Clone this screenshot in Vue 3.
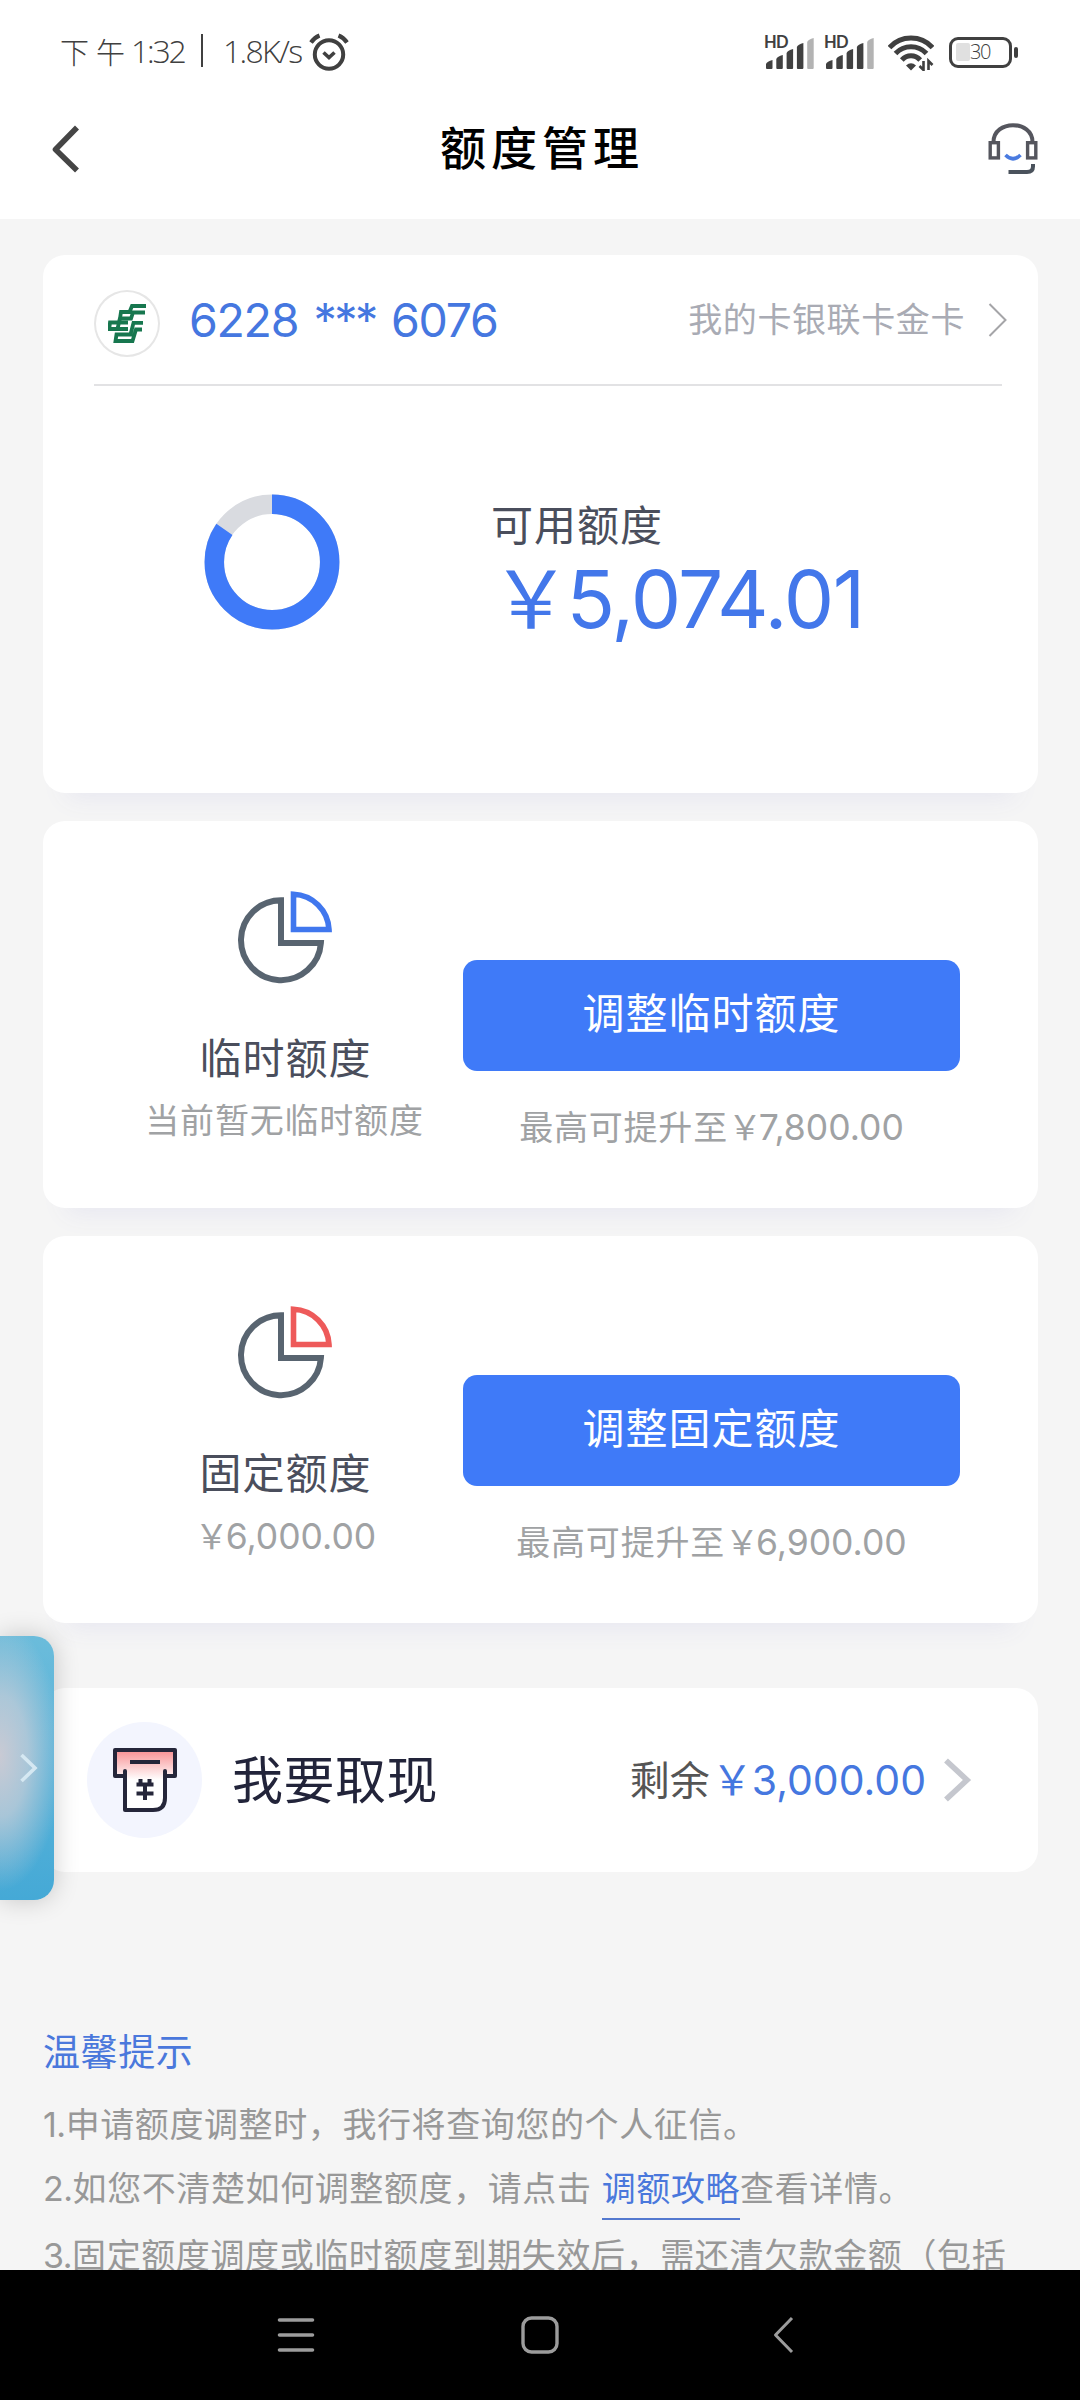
<script setup>
const bars = [8, 13, 19, 25, 30]

const limits = [
  { name: '临时额度', note: '当前暂无临时额度', amount: '', max: '7,800.00', accent: '#4077ee' },
  { name: '固定额度', note: '', amount: '6,000.00', max: '6,900.00', accent: '#ee5a5a' },
]
</script>

<template>
  <div class="screen">
    <header class="top">
      <div class="status">
        <div class="status-left">
          <span class="ampm">下午</span>
          <span class="clock">1:32</span>
          <i class="sep"></i>
          <span class="speed">1.8K/s</span>
          <svg class="alarm" width="40" height="38" viewBox="0 0 40 38" fill="none" stroke="#404040">
            <circle cx="20" cy="21.500" r="14.200" stroke-width="4" />
            <path d="M14.500 19.500 20 24.500 25.500 19.500" stroke-width="3.600" />
            <path d="M2 9.500Q5.500 4.500 10.500 2.500M38 9.500Q34.500 4.500 29.500 2.500" stroke-width="4.200" />
          </svg>
        </div>
        <div class="status-right">
          <div v-for="n in 2" :key="n" class="signal">
            <svg width="52" height="34" viewBox="0 0 52 34">
              <path
                v-for="(h, i) in bars"
                :key="i"
                :d="`M${2 + i * 10.300} 33v-${h - 4}q1-2.500 6.500-4v${h}q0 1-1 1h-4.500q-1 0-1-1z`"
                :fill="i === 4 ? '#b3b3b3' : '#404040'"
              />
            </svg>
            <span class="hd">HD</span>
          </div>
          <svg class="wifi" width="46" height="36" viewBox="0 0 46 36" fill="none" stroke="#404040" stroke-width="5">
            <path d="M1.500 12.500C13-.2 33-.2 44.500 12.500" />
            <path d="M7.500 18.500C16 9.500 30 9.500 38.500 18.500" />
            <path d="M13.800 25C19 19.300 27 19.300 32.200 25" />
            <path d="M18 30.500Q23 26 28 30.500L23 35.500z" fill="#404040" stroke="none" />
            <path d="M35.500 26v9l-4-4M40.500 35v-9l4 4" stroke-width="2.600" />
          </svg>
          <div class="battery"><i class="level"></i><span>30</span></div>
          <i class="nub"></i>
        </div>
      </div>
      <div class="titlebar">
        <svg width="30" height="50" viewBox="0 0 30 50" fill="none" stroke="#454545" stroke-width="5.600" stroke-linejoin="round">
          <path d="M27 3.500 5.500 25.500 27 46.500" />
        </svg>
        <h1>额度管理</h1>
        <svg width="52" height="52" viewBox="0 0 52 52" fill="none" stroke="#55565e" stroke-width="3.400">
          <path d="M6.500 19C6.500-3.500 45.500-3.500 45.500 19" stroke-width="4" />
          <rect x="3.200" y="19.700" width="8.200" height="15.200" />
          <rect x="40.600" y="19.700" width="8.200" height="15.200" />
          <path d="M18.500 32Q26 39.500 33.500 32" stroke="#4a7be0" stroke-width="3.600" />
          <path d="M46 41v2.500Q46 49 40 49H21.500" stroke="#4a525c" stroke-width="4" />
        </svg>
      </div>
    </header>

    <main class="content">
      <section class="card overview">
        <div class="account">
          <span class="bank">
            <svg width="39" height="39" viewBox="0 0 39 39" fill="none" stroke="#17774f" stroke-width="3.800">
              <path d="M38 2H24l-2.500 6H13l-1 6.500h11l2-6H37" />
              <path d="M20 18.500H2L1.200 25H20M12 14l-2.500 11" />
              <path d="M35 18.800H25.500L22.500 30.500H8.500L7.500 37H24.500L28 25.500H34" />
            </svg>
          </span>
          <span class="cardno">6228 <span class="mask">***</span> 6076</span>
          <span class="cardname">我的卡银联卡金卡</span>
          <svg class="go" width="20" height="36" viewBox="0 0 20 36" fill="none" stroke="#a5a5a8" stroke-width="2">
            <path d="M1.500 2 17.500 18 1.500 34" />
          </svg>
        </div>
        <div class="available">
          <svg width="136" height="136" viewBox="0 0 136 136" fill="none" stroke-width="19.500">
            <circle cx="68" cy="68" r="57.700" stroke="#d9dbe0" />
            <circle cx="68" cy="68" r="57.700" stroke="#3f7af8" pathLength="100" stroke-dasharray="84.570 100" transform="rotate(-90 68 68)" />
          </svg>
          <div class="figures">
            <p class="label">可用额度</p>
            <p class="total"><span class="yen">&#xFFE5;</span>5,074.01</p>
          </div>
        </div>
      </section>

      <section v-for="item in limits" :key="item.name" class="card limit">
        <div class="kind">
          <svg width="96" height="96" viewBox="0 0 96 96" fill="none" stroke-width="6">
            <path d="M45 10.200A40 40 0 1 0 84.900 53H45z" stroke="#586470" />
            <path d="M57.500 4.200V39.500H93A37 37 0 0 0 57.500 4.200z" :stroke="item.accent" stroke-width="5.600" />
          </svg>
          <h2>{{ item.name }}</h2>
          <p v-if="item.note">{{ item.note }}</p>
          <p v-else class="fixed"><span class="yen">&#xFFE5;</span><span class="num">{{ item.amount }}</span></p>
        </div>
        <div class="action">
          <button type="button">调整{{ item.name }}</button>
          <p>最高可提升至<span class="yen">&#xFFE5;</span><span class="num">{{ item.max }}</span></p>
        </div>
      </section>

      <section class="card cash">
        <span class="cash-icon">
          <svg width="66" height="66" viewBox="0 0 66 66" fill="none" stroke="#25263a" stroke-width="4" stroke-linejoin="round" stroke-linecap="round">
            <defs>
              <linearGradient id="slot" x1="0" y1="0" x2="0" y2="1">
                <stop offset="0" stop-color="#f88f92" />
                <stop offset="0.500" stop-color="#fff" />
              </linearGradient>
            </defs>
            <path d="M3 3h60v26H54v21q0 13-11 13H13V29H3z" fill="url(#slot)" stroke="none" />
            <path d="M13 29H3V3h60v26H53" />
            <path d="M13 24v39h28q12 0 12-12V24" />
            <path d="M18 15h30M24.500 37.500h17M24.500 46.500h17M33 37.500v15.500M28.500 32v5M37.500 32v5" stroke-linecap="butt" />
          </svg>
        </span>
        <h2>我要取现</h2>
        <p class="rest">剩余<b><span class="yen">&#xFFE5;</span>3,000.00</b></p>
        <svg class="go" width="30" height="46" viewBox="0 0 30 46" fill="none" stroke="#c5c7ce" stroke-width="5.600">
          <path d="M4 3.500 25 23 4 42.500" />
        </svg>
      </section>

      <section class="tips">
        <h3>温馨提示</h3>
        <p><span class="no">1.</span>申请额度调整时，我行将查询您的个人征信。</p>
        <p class="withlink"><span class="no">2.</span>如您不清楚如何调整额度，请点击&nbsp;<a>调额攻略</a>查看详情。</p>
        <p><span class="no">3.</span>固定额度调度或临时额度到期失效后，需还清欠款金额（包括</p>
      </section>
    </main>

    <aside class="drawer">
      <svg width="20" height="32" viewBox="0 0 20 32" fill="none" stroke="#d5e8f2" stroke-width="3.600">
        <path d="M3.500 3 17 16 3.500 29" />
      </svg>
    </aside>

    <footer class="nav">
      <svg width="38" height="38" viewBox="0 0 38 38" stroke="#9c9c9c" stroke-width="3.600" stroke-linecap="round">
        <path d="M2.500 4h33M2.500 19h33M2.500 34h33" />
      </svg>
      <svg width="38" height="38" viewBox="0 0 38 38" fill="none" stroke="#9c9c9c" stroke-width="3.400">
        <rect x="2" y="2" width="34" height="34" rx="8.500" />
      </svg>
      <svg width="38" height="38" viewBox="0 0 38 38" fill="none" stroke="#9c9c9c" stroke-width="3" stroke-linejoin="round">
        <path d="M27 2 10.500 19 27 36" />
      </svg>
    </footer>
  </div>
</template>

<style>
body {
  background: #f5f5f5;
}
</style>

<style scoped>
.screen {
  position: relative;
  display: flex;
  flex-direction: column;
  width: 1080px;
  height: 2400px;
  overflow: hidden;
  background: #f5f5f5;
  font-family: Inter, "Noto Sans CJK SC", sans-serif;
  white-space: nowrap;
}
h1, h2, h3, p { margin: 0; font-weight: 400; }
svg { display: block; flex: none; }
i { flex: none; }

.top { flex: none; height: 219px; background: #fff; }
.status {
  display: flex;
  justify-content: space-between;
  height: 104px;
  padding: 0 62px 0 60px;
  color: #404040;
  font-family: "Open Sans", "Noto Sans CJK SC", sans-serif;
  font-weight: 300;
}
.status-left, .status-right { display: flex; align-items: center; }
.status-left { height: 101px; }
.ampm { width: 71px; font-size: 29px; letter-spacing: 7px; }
.clock { width: 55px; font-size: 32px; letter-spacing: -2.200px; }
.sep { width: 2px; height: 33px; margin: 0 20px 0 15px; background: #404040; }
.speed { width: 82px; font-size: 32px; letter-spacing: -1.700px; }
.alarm { margin-left: 4px; margin-top: 2px; }
.signal { position: relative; width: 60px; height: 34px; }
.hd {
  position: absolute;
  left: 0;
  top: -2px;
  font: 700 16.500px/18px Lato, sans-serif;
  letter-spacing: -0.700px;
}
.wifi { margin: 2px 15px 0 4px; }
.battery {
  display: flex;
  align-items: center;
  box-sizing: border-box;
  width: 63px;
  height: 31px;
  padding-left: 4px;
  border: 3px solid #404040;
  border-radius: 9px;
  font-size: 20px;
  line-height: 20px;
}
.level { width: 14px; height: 18px; border-radius: 2px; background: #e0e0e0; }
.battery span { letter-spacing: -1.500px; }
.nub { width: 4px; height: 11px; margin-left: 2px; border-radius: 2px; background: #404040; }
.titlebar {
  display: flex;
  align-items: center;
  justify-content: space-between;
  height: 90px;
  padding: 0 41px 0 50px;
}
.titlebar h1 {
  margin: -8px 0 0 17px;
  color: #000;
  font-size: 46px;
  font-weight: 500;
  letter-spacing: 5px;
}

.content { flex: none; height: 2051px; overflow: hidden; }
.card {
  box-sizing: border-box;
  width: 995px;
  margin: 0 0 28px 43px;
  border-radius: 22px;
  background: #fff;
  box-shadow: 0 28px 24px -24px #e6e6f0;
}
.yen { font-family: "Noto Sans CJK SC", sans-serif; }

.overview { height: 538px; margin-top: 36px; padding: 0 36px 0 51px; }
.account { display: flex; align-items: center; height: 129px; border-bottom: 2px solid #e2e2e4; }
.bank {
  display: flex;
  align-items: center;
  justify-content: center;
  box-sizing: border-box;
  width: 66px;
  height: 67px;
  margin-top: 8px;
  border: 2px solid #e6e6e6;
  border-radius: 50%;
}
.cardno { margin-left: 29px; color: #4577e0; font-size: 46.500px; letter-spacing: -1.300px; word-spacing: 3.500px; }
.mask { letter-spacing: -2.500px; }
.cardname { margin: -4px 23px 0 auto; color: #a9abb4; font-size: 34px; letter-spacing: 0.600px; }
.account .go { margin-right: -6px; }
.available { display: flex; align-items: flex-start; padding-top: 108px; padding-left: 110px; }
.figures { padding-top: 6px; margin-left: 151px; }
.label { color: #4a4e5c; font-size: 42px; line-height: 52px; letter-spacing: 1px; }
.total { color: #4377ea; font-size: 80px; line-height: 82px; letter-spacing: -1.600px; }
.total .yen { margin-right: -3px; }

.limit { display: flex; height: 387px; }
.kind { width: 485px; padding-top: 69px; text-align: center; }
.kind svg { margin: 0 auto 0 193px; }
.kind h2 { margin-top: 43px; color: #4a4e5c; font-size: 42px; line-height: 60px; letter-spacing: 1px; }
.kind p, .action p { color: #a0a2a4; font-size: 34px; letter-spacing: 0.800px; line-height: 50px; }
.kind p { margin: 7px 2px 0 0; }
.kind .fixed { margin: 6px 0 0; }
.num { margin-left: -4px; font-size: 35.500px; letter-spacing: 0; }
.action { width: 497px; margin-left: -65px; padding-top: 139px; text-align: center; }
.action button {
  display: block;
  width: 497px;
  height: 111px;
  padding: 0 0 4px;
  border: 0;
  border-radius: 14px;
  background: #3f7af8;
  color: #fff;
  font: inherit;
  font-size: 42px;
  line-height: 107px;
  letter-spacing: 1px;
}
.action p { margin-top: 30px; }

.cash { display: flex; align-items: center; height: 184px; margin-top: 65px; padding: 0 66px 0 44px; box-shadow: none; }
.cash-icon {
  display: flex;
  align-items: center;
  justify-content: center;
  width: 115px;
  height: 116px;
  border-radius: 50%;
  background: #f3f5fe;
}
.cash h2 { margin: -6px 0 0 30px; color: #22243a; font-size: 51px; letter-spacing: 0.500px; }
.rest { margin: -6px 0 0 auto; color: #555; font-size: 40px; }
.rest b { margin-left: 2px; color: #4577e0; font-size: 41px; font-weight: 400; }
.rest .yen { margin-right: -1px; }
.cash .go { margin-left: 16px; }

.tips { padding: 128px 0 0 43px; color: #989898; font-size: 34px; letter-spacing: 0.600px; }
.tips h3 { margin-bottom: 15px; color: #4a78dc; font-size: 37px; line-height: 50px; }
.tips p { line-height: 64px; }
.tips .no { letter-spacing: -0.500px; }
.tips .withlink { margin-bottom: 3px; }
.tips a { padding-bottom: 9px; border-bottom: 2px solid #5479cf; color: #4a78dc; }

.drawer {
  position: absolute;
  left: 0;
  top: 1636px;
  display: flex;
  align-items: center;
  width: 54px;
  height: 264px;
  padding-left: 18px;
  box-sizing: border-box;
  border-radius: 0 20px 20px 0;
  background:
    radial-gradient(ellipse 62px 135px at 0 120px, #c9cad4 0%, rgba(190, 203, 216, 0.800) 45%, rgba(150, 200, 222, 0) 100%),
    linear-gradient(#6bbcdb, #45a9d6);
  box-shadow: 0 0 26px rgba(0, 0, 0, 0.200);
}

.nav {
  display: flex;
  align-items: flex-start;
  flex: none;
  gap: 206px;
  box-sizing: border-box;
  height: 130px;
  padding: 46px 0 0 277px;
  background: #000;
}
</style>
